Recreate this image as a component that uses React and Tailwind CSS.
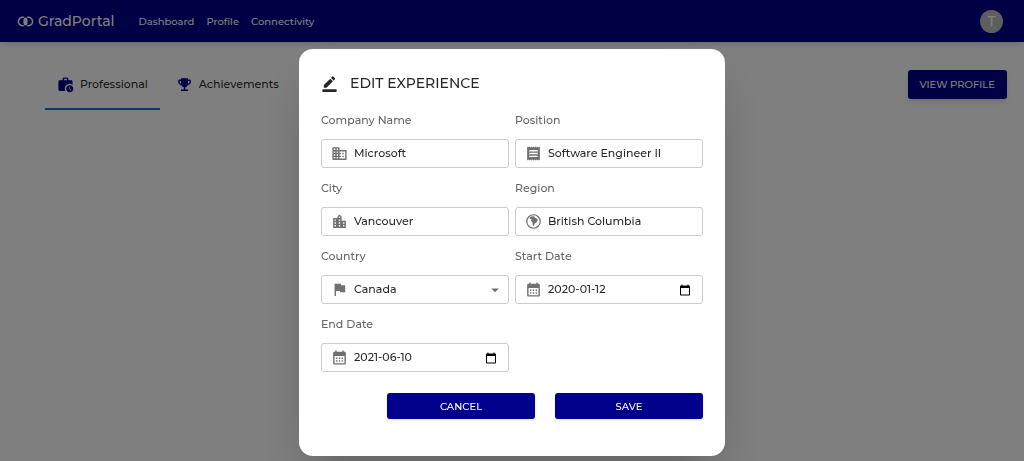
import React, { useState } from 'react';
import {
    MdWorkHistory,
    MdEmojiEvents,
    MdBorderColor,
    MdDomain,
    MdReceipt,
    MdLocationCity,
    MdFlag,
    MdCalendarMonth,
    MdArrowDropDown,
    MdJoinInner
} from 'react-icons/md';

const GlobeIcon = ({ size, className }) => (
    <svg viewBox="0 0 24 24" width={size} height={size} className={className}>
        <circle cx="12" cy="12" r="9.5" fill="none" stroke="currentColor" strokeWidth="1.7" />
        <path d="M6.500 6.500C8 5 10 4.500 12.500 4.500l1.500 2 3 1.500 1 2.500-2 3-2 1-1.500 4-1.500-1-.500-4-2-2.500.500-2.500-2.500-.500z" fill="currentColor" />
    </svg>
);

const DateIcon = () => (
    <svg viewBox="0 0 24 24" className="w-3 h-3" fill="currentColor">
        <path d="M20 3h-1V1h-2v2H7V1H5v2H4c-1.100 0-2 .9-2 2v16c0 1.100.9 2 2 2h16c1.100 0 2-.9 2-2V5c0-1.100-.9-2-2-2zm0 18H4V8h16v13z" />
    </svg>
);

const fields = [
    { name: 'company', label: 'Company Name', icon: MdDomain },
    { name: 'position', label: 'Position', icon: MdReceipt },
    { name: 'city', label: 'City', icon: MdLocationCity },
    { name: 'region', label: 'Region', icon: GlobeIcon },
    { name: 'country', label: 'Country', icon: MdFlag, type: 'select', options: ['Canada', 'United States'] },
    { name: 'startDate', label: 'Start Date', icon: MdCalendarMonth, type: 'date' },
    { name: 'endDate', label: 'End Date', icon: MdCalendarMonth, type: 'date' }
];

const Field = ({ field, value, onChange }) => {
    const control = 'min-w-0 flex-1 self-stretch bg-transparent outline-none appearance-none text-black/85';
    return (
        <div>
            <label htmlFor={field.name} className="block leading-5 mb-[9px] text-[#666666]">{field.label}</label>
            <div className="relative flex items-center h-[29px] pl-[9px] pr-[11px] gap-1.5 rounded-[3px] border border-[#cccccc]">
                <field.icon size={17} className="text-[#707070] shrink-0" />
                {field.type === 'select' ? (
                    <>
                        <select id={field.name} value={value} onChange={onChange} className={control}>
                            {field.options.map(o => <option key={o}>{o}</option>)}
                        </select>
                        <MdArrowDropDown size={18} className="absolute right-1 text-[#707070] pointer-events-none" />
                    </>
                ) : (
                    <input id={field.name} type="text" value={value} onChange={onChange} className={control} />
                )}
                {field.type === 'date' && (
                    <button type="button" aria-label={`Pick ${field.label}`} className="text-black">
                        <DateIcon />
                    </button>
                )}
            </div>
        </div>
    );
};

const App = () => {
    const [values, setValues] = useState({
        company: 'Microsoft',
        position: 'Software Engineer II',
        city: 'Vancouver',
        region: 'British Columbia',
        country: 'Canada',
        startDate: '2020-01-12',
        endDate: '2021-06-10'
    });

    const update = (name) => (e) => setValues({ ...values, [name]: e.target.value });

    return (
        <div className="min-h-screen bg-white font-['Montserrat','Inter',sans-serif] text-[11px] font-medium">
            <nav className="flex items-center h-[42px] px-[17px] bg-[#00008b] text-white shadow-md">
                <a href="#" className="flex items-center gap-1 text-sm">
                    <MdJoinInner size={17} />
                    GradPortal
                </a>
                <div className="flex gap-3 ml-6 text-[10px]">
                    <a href="#dashboard">Dashboard</a>
                    <a href="#profile">Profile</a>
                    <a href="#connectivity">Connectivity</a>
                </div>
                <button className="ml-auto mr-1 w-[23px] h-[23px] rounded-full bg-[#bdbdbd] text-white text-sm">T</button>
            </nav>

            <div className="flex items-start justify-between pl-[45px] pr-[17px] pt-[18px]">
                <div className="flex text-black/85">
                    <button className="flex items-center gap-1.5 h-[50px] px-3 border-b-2 border-[#1976d2]">
                        <MdWorkHistory size={17} className="text-[#00008b]" />
                        Professional
                    </button>
                    <button className="flex items-center gap-1.5 h-[50px] px-4 border-b-2 border-transparent">
                        <MdEmojiEvents size={17} className="text-[#00008b]" />
                        Achievements
                    </button>
                </div>
                <button className="mt-2.5 h-[29px] px-3 rounded-[3px] bg-[#00008b] text-white text-[10px] shadow-md">VIEW PROFILE</button>
            </div>

            {/* Edit modal */}
            <div className="fixed inset-0 flex items-start justify-center pt-[49px] bg-black/50">
                <form role="dialog" aria-labelledby="edit-title" className="w-full max-w-[426px] px-[22px] pt-[22px] pb-[37px] rounded-[14px] bg-white shadow-2xl">
                    <div className="flex items-center gap-3 mb-[15px] text-black/85">
                        <MdBorderColor size={17} />
                        <h2 id="edit-title" className="text-sm leading-6">EDIT EXPERIENCE</h2>
                    </div>
                    <div className="grid grid-cols-2 gap-x-1.5 gap-y-2.5">
                        {fields.map(f => (
                            <Field key={f.name} field={f} value={values[f.name]} onChange={update(f.name)} />
                        ))}
                    </div>
                    <div className="flex justify-end gap-5 mt-[21px] text-[10px] text-white">
                        <button type="button" className="w-[148px] h-[26px] rounded-[3px] bg-[#00008b] shadow">CANCEL</button>
                        <button type="button" className="w-[148px] h-[26px] rounded-[3px] bg-[#00008b] shadow">SAVE</button>
                    </div>
                </form>
            </div>
        </div>
    );
};

export default App;
